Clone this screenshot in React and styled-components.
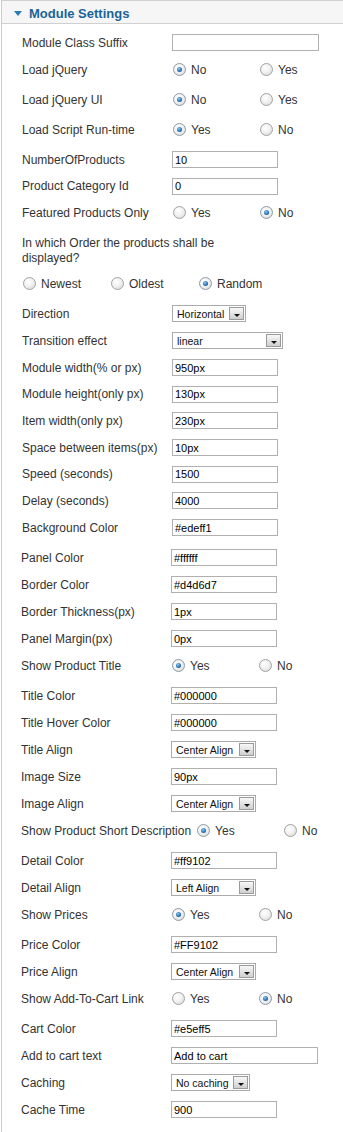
import React from 'react';
import styled, { createGlobalStyle, css } from 'styled-components';

const upperRows = [
  { label: 'Module Class Suffix', type: 'text', value: '', w: 147 },
  { label: 'Load jQuery', type: 'radio', options: ['No', 'Yes'], checked: 0 },
  { label: 'Load jQuery UI', type: 'radio', options: ['No', 'Yes'], checked: 0 },
  { label: 'Load Script Run-time', type: 'radio', options: ['Yes', 'No'], checked: 0 },
  { label: 'NumberOfProducts', type: 'text', value: '10' },
  { label: 'Product Category Id', type: 'text', value: '0', h: 26 },
  { label: 'Featured Products Only', type: 'radio', options: ['Yes', 'No'], checked: 1 },
];

const sliderRows = [
  { label: 'Direction', type: 'select', value: 'Horizontal', w: 74 },
  { label: 'Transition effect', type: 'select', value: 'linear', w: 111 },
  { label: 'Module width(% or px)', type: 'text', value: '950px' },
  { label: 'Module height(only px)', type: 'text', value: '130px', h: 26 },
  { label: 'Item width(only px)', type: 'text', value: '230px' },
  { label: 'Space between items(px)', type: 'text', value: '10px' },
  { label: 'Speed (seconds)', type: 'text', value: '1500', h: 26 },
  { label: 'Delay (seconds)', type: 'text', value: '4000' },
  { label: 'Background Color', type: 'text', value: '#edeff1', mb: 3 },
];

const lowerRows = [
  { label: 'Panel Color', type: 'text', value: '#ffffff' },
  { label: 'Border Color', type: 'text', value: '#d4d6d7' },
  { label: 'Border Thickness(px)', type: 'text', value: '1px' },
  { label: 'Panel Margin(px)', type: 'text', value: '0px' },
  { label: 'Show Product Title', type: 'radio', options: ['Yes', 'No'], checked: 0 },
  { label: 'Title Color', type: 'text', value: '#000000' },
  { label: 'Title Hover Color', type: 'text', value: '#000000' },
  { label: 'Title Align', type: 'select', value: 'Center Align', w: 85 },
  { label: 'Image Size', type: 'text', value: '90px' },
  { label: 'Image Align', type: 'select', value: 'Center Align', w: 85 },
  { label: 'Show Product Short Description', type: 'radio', options: ['Yes', 'No'], checked: 0 },
  { label: 'Detail Color', type: 'text', value: '#ff9102' },
  { label: 'Detail Align', type: 'select', value: 'Left Align', w: 85 },
  { label: 'Show Prices', type: 'radio', options: ['Yes', 'No'], checked: 0 },
  { label: 'Price Color', type: 'text', value: '#FF9102' },
  { label: 'Price Align', type: 'select', value: 'Center Align', w: 85 },
  { label: 'Show Add-To-Cart Link', type: 'radio', options: ['Yes', 'No'], checked: 1 },
  { label: 'Cart Color', type: 'text', value: '#e5eff5' },
  { label: 'Add to cart text', type: 'text', value: 'Add to cart', w: 147 },
  { label: 'Caching', type: 'select', value: 'No caching', w: 79 },
  { label: 'Cache Time', type: 'text', value: '900' },
];

const RadioGroup = ({ options, checked, width = 87 }) => (
  <Options>
    {options.map((opt, i) => (
      <Option key={opt} $w={width}>
        <RadioDot $on={i === checked} />
        {opt}
      </Option>
    ))}
  </Options>
);

const Field = ({ row }) => {
  if (row.type === 'radio') return <RadioGroup options={row.options} checked={row.checked} />;
  if (row.type === 'select')
    return (
      <SelectBox $w={row.w}>
        <span>{row.value}</span>
        <SelectButton />
      </SelectBox>
    );
  return <TextInput readOnly value={row.value} $w={row.w || 106} />;
};

const Rows = ({ rows }) =>
  rows.map((row) => (
    <Row key={row.label} $h={row.h} $mb={row.mb ?? (row.type === 'radio' ? 3 : 0)}>
      <Label>{row.label}</Label>
      <Field row={row} />
    </Row>
  ));

const App = () => {
  return (
    <>
      <GlobalStyle />
      <Panel>
        <Header>
          <Arrow />
          <Title>Module Settings</Title>
        </Header>
        <Body>
          <Section $indent={20}>
            <Rows rows={upperRows} />
            <Question>In which Order the products shall be displayed?</Question>
            <Row $mb={3}>
              <RadioGroup options={['Newest', 'Oldest', 'Random']} checked={2} width={88} />
            </Row>
            <Rows rows={sliderRows} />
          </Section>
          <Section $indent={19}>
            <Rows rows={lowerRows} />
          </Section>
        </Body>
      </Panel>
    </>
  );
};

export default App;

const GlobalStyle = createGlobalStyle`
  html, body {
    margin: 0;
    padding: 0;
    background: #ffffff;
  }
  body {
    font-family: 'Liberation Sans', Arial, sans-serif;
  }
`;

const Panel = styled.div`
  margin-left: 1px;
  border-left: 1px solid #cdcdcd;
  min-height: 1132px;
  box-sizing: border-box;
`;

const Header = styled.div`
  height: 24px;
  box-sizing: border-box;
  background: #f6f6f6;
  border-top: 1px solid #d0d0d0;
  border-bottom: 1px solid #d0d0d0;
  display: flex;
  align-items: center;
  padding: 2px 0 0 12px;
  gap: 7px;
`;

const Arrow = styled.span`
  width: 0;
  height: 0;
  border-left: 4px solid transparent;
  border-right: 4px solid transparent;
  border-top: 5px solid #2b7ab8;
`;

const Title = styled.h3`
  margin: 0;
  font-size: 13px;
  font-weight: bold;
  color: #1a6498;
`;

const Body = styled.div`
  padding-top: 5px;
`;

const Section = styled.div`
  padding-left: ${(props) => props.$indent}px;
`;

const Row = styled.div`
  display: flex;
  align-items: center;
  height: ${(props) => props.$h || 27}px;
  margin-bottom: ${(props) => props.$mb || 0}px;
`;

const Label = styled.label`
  flex-shrink: 0;
  min-width: 145px;
  padding-right: 5px;
  font-size: 12px;
  color: #333333;
  white-space: nowrap;
`;

const Question = styled.div`
  width: 230px;
  padding: 7px 0 4px;
  font-size: 12px;
  line-height: 15px;
  color: #333333;
`;

const Options = styled.div`
  display: flex;
  align-items: center;
`;

const Option = styled.span`
  flex-shrink: 0;
  width: ${(props) => props.$w}px;
  display: inline-flex;
  align-items: center;
  gap: 5px;
  font-size: 12px;
  color: #333333;
  white-space: nowrap;

  &:last-child {
    width: auto;
  }
`;

const RadioDot = styled.span`
  position: relative;
  flex-shrink: 0;
  width: 13px;
  height: 13px;
  margin-left: 1px;
  box-sizing: border-box;
  border-radius: 50%;
  border: 1px solid #a2a2a2;
  background: radial-gradient(circle at 40% 35%, #ffffff 0%, #f1f1f1 45%, #d4d4d4 100%);

  ${(props) =>
    props.$on &&
    css`
      border-color: #8d9aa6;
      &::after {
        content: '';
        position: absolute;
        left: 3px;
        top: 3px;
        width: 5px;
        height: 5px;
        border-radius: 50%;
        background: radial-gradient(circle at 40% 35%, #8ccaf2 0%, #2a74b6 55%, #12447a 100%);
      }
    `}
`;

const TextInput = styled.input`
  flex-shrink: 0;
  width: ${(props) => props.$w}px;
  height: 17px;
  box-sizing: border-box;
  margin: 0;
  padding: 0 2px;
  border: 1px solid #b0b0b0;
  border-radius: 0;
  background: #ffffff;
  font-family: 'Liberation Sans', Arial, sans-serif;
  font-size: 11px;
  color: #000000;
  outline: none;
`;

const SelectBox = styled.div`
  flex-shrink: 0;
  width: ${(props) => props.$w}px;
  height: 17px;
  box-sizing: border-box;
  border: 1px solid #ababab;
  background: #ffffff;
  display: flex;
  align-items: center;
  justify-content: space-between;
  padding: 0 1px 0 4px;
  font-size: 10.5px;
  color: #111111;
  white-space: nowrap;
`;

const SelectButton = styled.span`
  width: 15px;
  height: 13px;
  box-sizing: border-box;
  border: 1px solid #9a9a9a;
  background: linear-gradient(#f8f8f8, #cfcfcf);
  display: flex;
  align-items: center;
  justify-content: center;

  &::before {
    content: '';
    margin-top: 3px;
    border-left: 3px solid transparent;
    border-right: 3px solid transparent;
    border-top: 3px solid #111111;
  }
`;
